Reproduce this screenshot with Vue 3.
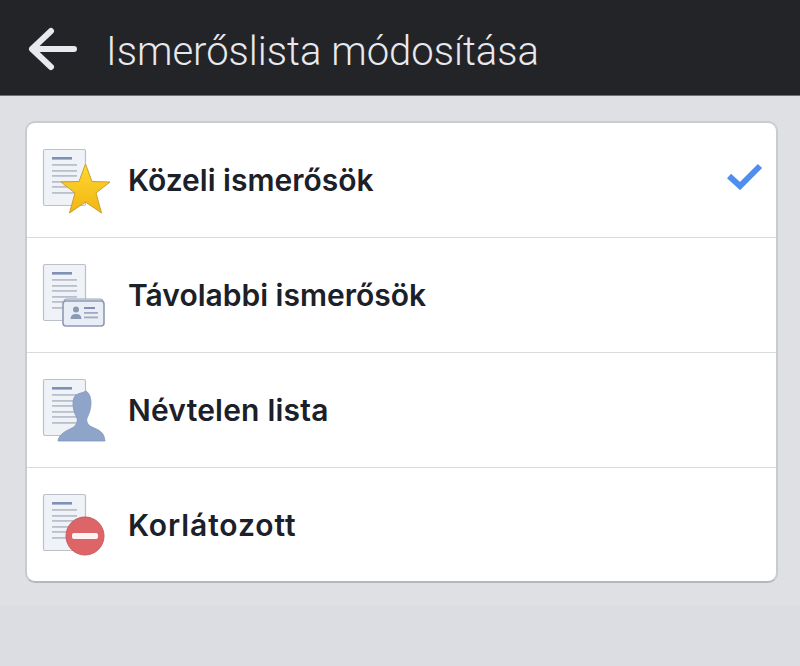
<script setup>
const lists = [
  { name: "Közeli ismerősök", icon: "star", selected: true, tracking: "0" },
  { name: "Távolabbi ismerősök", icon: "card", selected: false, tracking: "0" },
  { name: "Névtelen lista", icon: "person", selected: false, tracking: "0.2px" },
  { name: "Korlátozott", icon: "blocked", selected: false, tracking: "0.9px" },
];
</script>

<template>
  <div class="page">
    <header class="top-bar">
      <svg class="back" width="50" height="44" viewBox="0 0 50 44">
        <path d="M23 4 L4 22 L23 40 M4 22 H46" fill="none" stroke="#e8e9ee" stroke-width="6" stroke-linecap="round" stroke-linejoin="round" />
      </svg>
      <h1 class="title">Ismerőslista módosítása</h1>
    </header>

    <main class="content">
      <ul class="card">
        <li v-for="item in lists" :key="item.name" class="row">
          <svg class="list-icon" width="72" height="68" viewBox="0 0 72 68">
            <rect x="1.5" y="1.5" width="42" height="56" rx="1.5" fill="#eff2f7" stroke="#bcc0c8" stroke-width="1.2" />
            <rect x="10" y="9" width="20" height="2.6" fill="#7f90b5" />
            <rect v-for="y in [16, 22, 27, 33, 38, 44]" :key="y" x="10" :y="y" width="25" height="1.8" fill="#bac0cb" />

            <template v-if="item.icon === 'star'">
              <defs>
                <linearGradient id="starFill" x1="0" y1="0" x2="0" y2="1">
                  <stop offset="0" stop-color="#fdd835" />
                  <stop offset="1" stop-color="#f3b50f" />
                </linearGradient>
              </defs>
              <path d="M43.5 16 L50 33.5 L68 34 L54 45 L59.5 65 L43.5 54 L27.5 65 L33 45 L19 34 L37 33.5 Z" fill="url(#starFill)" stroke="#c9a02a" stroke-width="1" stroke-linejoin="round" />
            </template>

            <template v-else-if="item.icon === 'card'">
              <rect x="22" y="36" width="39" height="25" rx="3" fill="#dfe4ee" stroke="#9aa6bb" stroke-width="1.2" />
              <rect x="21" y="38" width="41" height="25" rx="3" fill="#e9edf5" stroke="#8d9ab2" stroke-width="1.6" />
              <circle cx="34" cy="46.5" r="3" fill="#8a9ab5" />
              <path d="M28.5 56 C29 51.5 31.5 51 34 51 C36.5 51 39 51.5 39.5 56 Z" fill="#8a9ab5" />
              <rect x="42" y="44" width="11" height="2" fill="#7f90b5" />
              <rect x="42" y="49" width="14" height="1.8" fill="#a1abbd" />
              <rect x="42" y="53.5" width="14" height="1.8" fill="#a1abbd" />
            </template>

            <template v-else-if="item.icon === 'person'">
              <path d="M34 17 C37 15 41 15 44 13 C47 15 49 19 49 25 C49 31 47 36 45 40 C44 44 46 47 50 49 C56 52 62 53 63 63 H16 C17 56 24 53 30 50 C34 48 36 44 35 40 C32 35 31 30 31 25 C31 21 32 19 34 17 Z" fill="#8fa4c9" stroke="#7f96bd" stroke-width="0.8" />
            </template>

            <template v-else>
              <circle cx="43" cy="43" r="19" fill="#de6567" stroke="#c9595c" stroke-width="1" />
              <rect x="30" y="40" width="26" height="6" rx="2" fill="#fdf3f2" />
            </template>
          </svg>

          <span class="name" :style="{ letterSpacing: item.tracking }">{{ item.name }}</span>

          <svg v-if="item.selected" class="check" width="36" height="28" viewBox="0 0 36 28">
            <path d="M2 14 L13 24 L33 4" fill="none" stroke="#4f8ef0" stroke-width="6" />
          </svg>
        </li>
      </ul>
    </main>
  </div>
</template>

<style>
html,
body {
  margin: 0;
  background: #dddfe4;
}
</style>

<style scoped>
.page {
  height: 666px;
  overflow: hidden;
  background: linear-gradient(#dfe0e4 605px, #dcdde2 605px);
  font-family: Roboto, "Liberation Sans", sans-serif;
}

.top-bar {
  height: 96px;
  box-sizing: border-box;
  display: flex;
  align-items: center;
  padding: 8px 0 0 28px;
  background: #232427;
  border-bottom: 1px solid #6d6e72;
}

.back {
  flex: none;
  margin-top: -6px;
}

.title {
  margin: 0 0 0 28px;
  font-size: 40px;
  font-weight: 300;
  color: #e8e9ee;
}

.content {
  padding: 25px 22px 0 25px;
}

.card {
  margin: 0;
  padding: 0;
  list-style: none;
  background: #fff;
  border: 2px solid #c9cbd0;
  border-bottom-color: #b5b7bc;
  border-radius: 10px;
}

.row {
  height: 114px;
  display: flex;
  align-items: center;
  padding-left: 15px;
  padding-right: 13px;
  border-bottom: 1px solid #d9dade;
}

.row:last-child {
  height: 113px;
  border-bottom: none;
}

.list-icon {
  flex: none;
  margin-top: 4px;
}

.name {
  margin-left: 14px;
  font-family: Inter, Roboto, sans-serif;
  font-size: 30px;
  font-weight: 600;
  color: #1c2028;
}

.check {
  flex: none;
  margin-left: auto;
  margin-top: -8px;
}
</style>
